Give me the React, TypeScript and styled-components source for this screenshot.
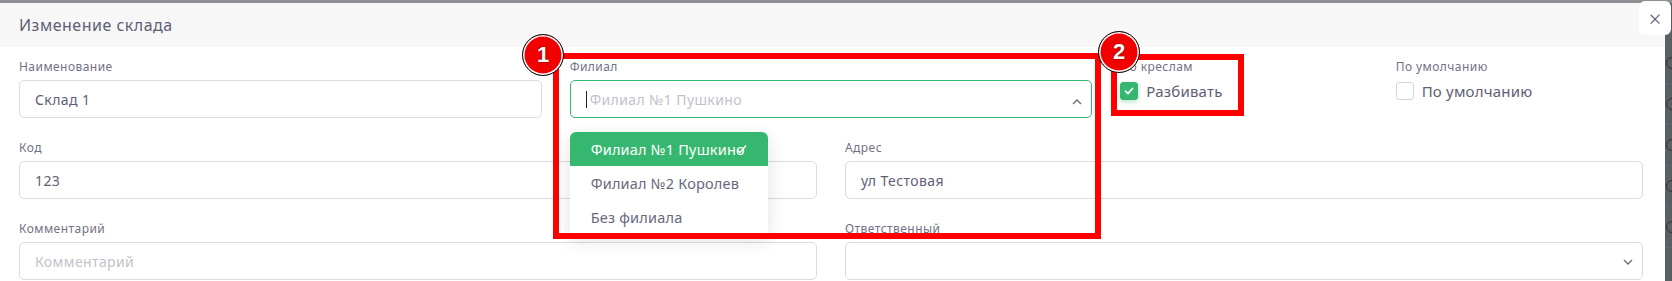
import React from 'react';
import styled, { createGlobalStyle } from 'styled-components';

const GlobalStyle = createGlobalStyle`
  html, body {
    margin: 0;
    padding: 0;
    background: #8c8f93;
  }
  * {
    box-sizing: border-box;
  }
`;

const Page = styled.div`
  position: relative;
  display: flex;
  flex-direction: column;
  width: 1672px;
  height: 281px;
  overflow: hidden;
  font-family: 'Noto Sans', 'Open Sans', sans-serif;
  background: #8c8f93;
`;

const TopStrip = styled.div`
  height: 3px;
  flex-shrink: 0;
  background: #8c8f93;
`;

const Screen = styled.div`
  display: flex;
  flex: 1;
`;

const Modal = styled.div`
  flex: 1;
  display: flex;
  flex-direction: column;
  background: #fff;
`;

const Header = styled.div`
  display: flex;
  align-items: center;
  height: 44px;
  padding-left: 19px;
  background: #f7f7f8;
  color: #625e76;
  font-size: 16px;
  letter-spacing: 0.5px;
`;

const Body = styled.div`
  display: flex;
  flex-direction: column;
  gap: 22px;
  padding: 12px 22px 0 19px;
`;

const Row = styled.div<{ cols: number }>`
  display: grid;
  grid-template-columns: repeat(${p => p.cols}, 1fr);
  column-gap: 28px;
`;

const Field = styled.div`
  position: relative;
  display: flex;
  flex-direction: column;
  gap: 5px;
  min-width: 0;
`;

const Label = styled.span`
  height: 16px;
  line-height: 16px;
  font-size: 12px;
  color: #747086;
  letter-spacing: 0.45px;
  white-space: nowrap;
`;

const Box = styled.div<{ focused?: boolean }>`
  display: flex;
  align-items: center;
  height: 38px;
  padding: 0 9px 0 15px;
  border: 1px solid ${p => (p.focused ? '#36b76f' : '#dcdbe3')};
  border-radius: 5px;
  background: #fff;
  font-size: 14px;
  letter-spacing: 0.4px;
  color: #625e76;
`;

const Value = styled.span<{ muted?: boolean }>`
  flex: 1;
  color: ${p => (p.muted ? '#c3c2cb' : '#625e76')};
  white-space: nowrap;
`;

const Caret = styled.span`
  width: 1px;
  height: 17px;
  margin-right: 3px;
  background: #222;
`;

const Chevron = styled.svg<{ lift?: number }>`
  width: 10px;
  height: 6px;
  margin-top: ${p => p.lift ?? 0}px;
  flex-shrink: 0;
`;

const Sub = styled.div`
  display: grid;
  grid-template-columns: 1fr 1fr;
  column-gap: 28px;
`;

const CheckRow = styled.label`
  display: flex;
  align-items: center;
  gap: 8px;
  margin-top: 1px;
  font-size: 15px;
  color: #625e76;
  letter-spacing: 0.2px;
`;

const CheckBox = styled.span<{ checked?: boolean }>`
  display: flex;
  align-items: center;
  justify-content: center;
  width: 18px;
  height: 18px;
  border-radius: 3px;
  border: 1px solid ${p => (p.checked ? '#36b76f' : '#d6d5de')};
  background: ${p => (p.checked ? '#36b76f' : '#fff')};
  box-shadow: ${p => (p.checked ? '0 2px 5px rgba(54, 183, 111, 0.35)' : 'none')};
`;

const Menu = styled.div`
  position: absolute;
  top: 73px;
  left: 0;
  width: 198px;
  background: #fff;
  border-radius: 6px 6px 0 0;
  box-shadow: 0 6px 18px rgba(40, 40, 60, 0.14);
  z-index: 2;
`;

const MenuItem = styled.div<{ active?: boolean }>`
  position: relative;
  display: flex;
  align-items: center;
  height: 34px;
  padding-left: 21px;
  font-size: 14.5px;
  letter-spacing: 0.2px;
  color: ${p => (p.active ? '#fff' : '#6b6880')};
  background: ${p => (p.active ? '#36b76f' : '#fff')};
  border-radius: ${p => (p.active ? '6px 6px 0 0' : '0')};
  white-space: nowrap;
`;

const ItemCheck = styled.svg`
  position: absolute;
  left: 166px;
  top: 12px;
  width: 11px;
  height: 10px;
`;

const Side = styled.div`
  display: flex;
  flex-direction: column;
  width: 7px;
  padding-top: 40px;
  background: #5a5f64;
  overflow: hidden;
`;

const SideItem = styled.div`
  display: flex;
  align-items: center;
  height: 41px;
  border-bottom: 1px solid #62676c;
`;

const SideDot = styled.span`
  width: 12px;
  height: 12px;
  margin-left: 1px;
  border: 1px solid #2f3336;
  border-radius: 50%;
  flex-shrink: 0;
`;

const Close = styled.div`
  position: absolute;
  top: 1px;
  left: 1639px;
  display: flex;
  align-items: center;
  justify-content: center;
  width: 32px;
  height: 34px;
  background: #fff;
  border-radius: 6px;
  color: #5b5770;
  font-size: 22px;
  font-weight: 300;
  z-index: 3;
`;

const Frame = styled.div<{ x: number; y: number; w: number; h: number }>`
  position: absolute;
  left: ${p => p.x}px;
  top: ${p => p.y}px;
  width: ${p => p.w}px;
  height: ${p => p.h}px;
  border: 6px solid #ff0000;
  z-index: 4;
`;

const Badge = styled.div<{ x: number; y: number }>`
  position: absolute;
  left: ${p => p.x - 21}px;
  top: ${p => p.y - 21}px;
  display: flex;
  align-items: center;
  justify-content: center;
  width: 42px;
  height: 42px;
  border-radius: 50%;
  background: #f20000;
  border: 1px solid #111;
  box-shadow: inset 0 0 0 1.5px #fff;
  color: #fff;
  font-family: 'Liberation Sans', Arial, sans-serif;
  font-weight: 700;
  font-size: 22px;
  text-shadow: 0 0 2px rgba(0, 0, 0, 0.6);
  z-index: 5;
`;

const ChevronUp = () => (
  <Chevron viewBox="0 0 10 6" lift={5}>
    <path d="M1 5 L5 1 L9 5" fill="none" stroke="#6b6880" strokeWidth="1.3" />
  </Chevron>
);

const ChevronDown = () => (
  <Chevron viewBox="0 0 10 6" lift={2}>
    <path d="M1 1 L5 5 L9 1" fill="none" stroke="#6b6880" strokeWidth="1.3" />
  </Chevron>
);

const Tick = ({ size = 10 }: { size?: number }) => (
  <svg width={size} height={size} viewBox="0 0 10 10">
    <path d="M1.5 5.2 L4 7.6 L8.6 2.4" fill="none" stroke="#fff" strokeWidth="1.6" strokeLinecap="round" strokeLinejoin="round" />
  </svg>
);

const branches = ['Филиал №1 Пушкино', 'Филиал №2 Королев', 'Без филиала'];

const App = () => {
  return (
    <Page>
      <GlobalStyle />
      <TopStrip />
      <Screen>
        <Modal>
          <Header>Изменение склада</Header>
          <Body>
            <Row cols={3}>
              <Field>
                <Label>Наименование</Label>
                <Box>
                  <Value>Склад 1</Value>
                </Box>
              </Field>
              <Field>
                <Label>Филиал</Label>
                <Box focused>
                  <Caret />
                  <Value muted>Филиал №1 Пушкино</Value>
                  <ChevronUp />
                </Box>
                <Menu>
                  {branches.map((b, i) => (
                    <MenuItem key={b} active={i === 0}>
                      {b}
                      {i === 0 && (
                        <ItemCheck viewBox="0 0 11 10">
                          <path d="M1 5.5 L4 8.5 L10 1.5" fill="none" stroke="#fff" strokeWidth="1.4" />
                        </ItemCheck>
                      )}
                    </MenuItem>
                  ))}
                </Menu>
              </Field>
              <Sub>
                <Field>
                  <Label>По креслам</Label>
                  <CheckRow>
                    <CheckBox checked>
                      <Tick />
                    </CheckBox>
                    Разбивать
                  </CheckRow>
                </Field>
                <Field>
                  <Label>По умолчанию</Label>
                  <CheckRow>
                    <CheckBox />
                    По умолчанию
                  </CheckRow>
                </Field>
              </Sub>
            </Row>
            <Row cols={2}>
              <Field>
                <Label>Код</Label>
                <Box>
                  <Value>123</Value>
                </Box>
              </Field>
              <Field>
                <Label>Адрес</Label>
                <Box>
                  <Value>ул Тестовая</Value>
                </Box>
              </Field>
            </Row>
            <Row cols={2}>
              <Field>
                <Label>Комментарий</Label>
                <Box>
                  <Value muted>Комментарий</Value>
                </Box>
              </Field>
              <Field>
                <Label>Ответственный</Label>
                <Box>
                  <Value />
                  <ChevronDown />
                </Box>
              </Field>
            </Row>
          </Body>
        </Modal>
        <Side>
          {[0, 1, 2, 3, 4].map(i => (
            <SideItem key={i}>
              <SideDot />
            </SideItem>
          ))}
        </Side>
      </Screen>
      <Close>×</Close>
      <Frame x={553} y={53} w={548} h={186} />
      <Frame x={1111} y={54} w={133} h={62} />
      <Badge x={543} y={55}>1</Badge>
      <Badge x={1119} y={52}>2</Badge>
    </Page>
  );
};

export default App;
